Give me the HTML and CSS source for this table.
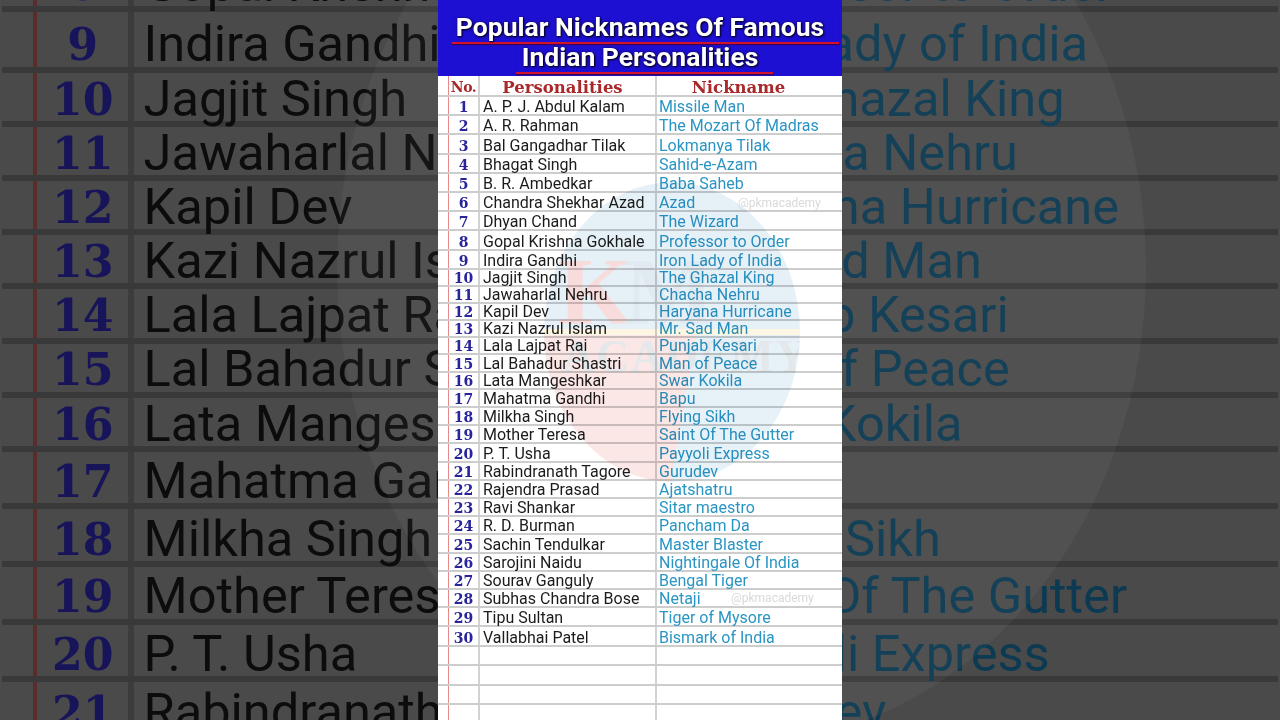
FILE: index.html
```html
<!DOCTYPE html>
<html lang="en">
<head>
<meta charset="utf-8">
<title>Popular Nicknames Of Famous Indian Personalities</title>
<link rel="stylesheet" href="styles.css">
</head>
<body>
<div class="backdrop" aria-hidden="true">
  <div class="panel">
    <div class="title">
      <span class="title-line"><span class="l1">Popular Nicknames Of Famous</span></span>
      <span class="title-line"><span class="l2">Indian Personalities</span></span>
    </div>
    <div class="table">
      <div class="row head"><div class="gap"></div><div class="no">No.</div><div class="name">Personalities</div><div class="nick">Nickname</div></div>
      <div class="row ra"><div class="gap"></div><div class="no">1</div><div class="name">A. P. J. Abdul Kalam</div><div class="nick">Missile Man</div></div>
      <div class="row ra"><div class="gap"></div><div class="no">2</div><div class="name">A. R. Rahman</div><div class="nick">The Mozart Of Madras</div></div>
      <div class="row ra"><div class="gap"></div><div class="no">3</div><div class="name">Bal Gangadhar Tilak</div><div class="nick">Lokmanya Tilak</div></div>
      <div class="row ra"><div class="gap"></div><div class="no">4</div><div class="name">Bhagat Singh</div><div class="nick">Sahid-e-Azam</div></div>
      <div class="row ra"><div class="gap"></div><div class="no">5</div><div class="name">B. R. Ambedkar</div><div class="nick">Baba Saheb</div></div>
      <div class="row ra"><div class="gap"></div><div class="no">6</div><div class="name">Chandra Shekhar Azad</div><div class="nick">Azad</div></div>
      <div class="row ra"><div class="gap"></div><div class="no">7</div><div class="name">Dhyan Chand</div><div class="nick">The Wizard</div></div>
      <div class="row ra"><div class="gap"></div><div class="no">8</div><div class="name">Gopal Krishna Gokhale</div><div class="nick">Professor to Order</div></div>
      <div class="row ra"><div class="gap"></div><div class="no">9</div><div class="name">Indira Gandhi</div><div class="nick">Iron Lady of India</div></div>
      <div class="row rb"><div class="gap"></div><div class="no">10</div><div class="name">Jagjit Singh</div><div class="nick">The Ghazal King</div></div>
      <div class="row rb"><div class="gap"></div><div class="no">11</div><div class="name">Jawaharlal Nehru</div><div class="nick">Chacha Nehru</div></div>
      <div class="row rb"><div class="gap"></div><div class="no">12</div><div class="name">Kapil Dev</div><div class="nick">Haryana Hurricane</div></div>
      <div class="row rb"><div class="gap"></div><div class="no">13</div><div class="name">Kazi Nazrul Islam</div><div class="nick">Mr. Sad Man</div></div>
      <div class="row rb"><div class="gap"></div><div class="no">14</div><div class="name">Lala Lajpat Rai</div><div class="nick">Punjab Kesari</div></div>
      <div class="row rb"><div class="gap"></div><div class="no">15</div><div class="name">Lal Bahadur Shastri</div><div class="nick">Man of Peace</div></div>
      <div class="row rb"><div class="gap"></div><div class="no">16</div><div class="name">Lata Mangeshkar</div><div class="nick">Swar Kokila</div></div>
      <div class="row rc"><div class="gap"></div><div class="no">17</div><div class="name">Mahatma Gandhi</div><div class="nick">Bapu</div></div>
      <div class="row rc"><div class="gap"></div><div class="no">18</div><div class="name">Milkha Singh</div><div class="nick">Flying Sikh</div></div>
      <div class="row rc"><div class="gap"></div><div class="no">19</div><div class="name">Mother Teresa</div><div class="nick">Saint Of The Gutter</div></div>
      <div class="row rc"><div class="gap"></div><div class="no">20</div><div class="name">P. T. Usha</div><div class="nick">Payyoli Express</div></div>
      <div class="row rc"><div class="gap"></div><div class="no">21</div><div class="name">Rabindranath Tagore</div><div class="nick">Gurudev</div></div>
      <div class="row rc"><div class="gap"></div><div class="no">22</div><div class="name">Rajendra Prasad</div><div class="nick">Ajatshatru</div></div>
      <div class="row rc"><div class="gap"></div><div class="no">23</div><div class="name">Ravi Shankar</div><div class="nick">Sitar maestro</div></div>
      <div class="row rc"><div class="gap"></div><div class="no">24</div><div class="name">R. D. Burman</div><div class="nick">Pancham Da</div></div>
      <div class="row rc"><div class="gap"></div><div class="no">25</div><div class="name">Sachin Tendulkar</div><div class="nick">Master Blaster</div></div>
      <div class="row rc"><div class="gap"></div><div class="no">26</div><div class="name">Sarojini Naidu</div><div class="nick">Nightingale Of India</div></div>
      <div class="row rc"><div class="gap"></div><div class="no">27</div><div class="name">Sourav Ganguly</div><div class="nick">Bengal Tiger</div></div>
      <div class="row rc"><div class="gap"></div><div class="no">28</div><div class="name">Subhas Chandra Bose</div><div class="nick">Netaji</div></div>
      <div class="row rc"><div class="gap"></div><div class="no">29</div><div class="name">Tipu Sultan</div><div class="nick">Tiger of Mysore</div></div>
      <div class="row rd"><div class="gap"></div><div class="no">30</div><div class="name">Vallabhai Patel</div><div class="nick">Bismark of India</div></div>
      <div class="row re"><div class="gap"></div><div class="no"></div><div class="name"></div><div class="nick"></div></div>
      <div class="row re"><div class="gap"></div><div class="no"></div><div class="name"></div><div class="nick"></div></div>
      <div class="row re"><div class="gap"></div><div class="no"></div><div class="name"></div><div class="nick"></div></div>
      <div class="row re"><div class="gap"></div><div class="no"></div><div class="name"></div><div class="nick"></div></div>
    </div>
    <div class="logo"></div>
  </div>
</div>

<div class="stage">
  <div class="panel">
    <div class="title">
      <span class="title-line"><span class="l1">Popular Nicknames Of Famous</span></span>
      <span class="title-line"><span class="l2">Indian Personalities</span></span>
    </div>
    <div class="table">
      <div class="row head"><div class="gap"></div><div class="no">No.</div><div class="name">Personalities</div><div class="nick">Nickname</div></div>
      <div class="row ra"><div class="gap"></div><div class="no">1</div><div class="name">A. P. J. Abdul Kalam</div><div class="nick">Missile Man</div></div>
      <div class="row ra"><div class="gap"></div><div class="no">2</div><div class="name">A. R. Rahman</div><div class="nick">The Mozart Of Madras</div></div>
      <div class="row ra"><div class="gap"></div><div class="no">3</div><div class="name">Bal Gangadhar Tilak</div><div class="nick">Lokmanya Tilak</div></div>
      <div class="row ra"><div class="gap"></div><div class="no">4</div><div class="name">Bhagat Singh</div><div class="nick">Sahid-e-Azam</div></div>
      <div class="row ra"><div class="gap"></div><div class="no">5</div><div class="name">B. R. Ambedkar</div><div class="nick">Baba Saheb</div></div>
      <div class="row ra"><div class="gap"></div><div class="no">6</div><div class="name">Chandra Shekhar Azad</div><div class="nick">Azad</div></div>
      <div class="row ra"><div class="gap"></div><div class="no">7</div><div class="name">Dhyan Chand</div><div class="nick">The Wizard</div></div>
      <div class="row ra"><div class="gap"></div><div class="no">8</div><div class="name">Gopal Krishna Gokhale</div><div class="nick">Professor to Order</div></div>
      <div class="row ra"><div class="gap"></div><div class="no">9</div><div class="name">Indira Gandhi</div><div class="nick">Iron Lady of India</div></div>
      <div class="row rb"><div class="gap"></div><div class="no">10</div><div class="name">Jagjit Singh</div><div class="nick">The Ghazal King</div></div>
      <div class="row rb"><div class="gap"></div><div class="no">11</div><div class="name">Jawaharlal Nehru</div><div class="nick">Chacha Nehru</div></div>
      <div class="row rb"><div class="gap"></div><div class="no">12</div><div class="name">Kapil Dev</div><div class="nick">Haryana Hurricane</div></div>
      <div class="row rb"><div class="gap"></div><div class="no">13</div><div class="name">Kazi Nazrul Islam</div><div class="nick">Mr. Sad Man</div></div>
      <div class="row rb"><div class="gap"></div><div class="no">14</div><div class="name">Lala Lajpat Rai</div><div class="nick">Punjab Kesari</div></div>
      <div class="row rb"><div class="gap"></div><div class="no">15</div><div class="name">Lal Bahadur Shastri</div><div class="nick">Man of Peace</div></div>
      <div class="row rb"><div class="gap"></div><div class="no">16</div><div class="name">Lata Mangeshkar</div><div class="nick">Swar Kokila</div></div>
      <div class="row rc"><div class="gap"></div><div class="no">17</div><div class="name">Mahatma Gandhi</div><div class="nick">Bapu</div></div>
      <div class="row rc"><div class="gap"></div><div class="no">18</div><div class="name">Milkha Singh</div><div class="nick">Flying Sikh</div></div>
      <div class="row rc"><div class="gap"></div><div class="no">19</div><div class="name">Mother Teresa</div><div class="nick">Saint Of The Gutter</div></div>
      <div class="row rc"><div class="gap"></div><div class="no">20</div><div class="name">P. T. Usha</div><div class="nick">Payyoli Express</div></div>
      <div class="row rc"><div class="gap"></div><div class="no">21</div><div class="name">Rabindranath Tagore</div><div class="nick">Gurudev</div></div>
      <div class="row rc"><div class="gap"></div><div class="no">22</div><div class="name">Rajendra Prasad</div><div class="nick">Ajatshatru</div></div>
      <div class="row rc"><div class="gap"></div><div class="no">23</div><div class="name">Ravi Shankar</div><div class="nick">Sitar maestro</div></div>
      <div class="row rc"><div class="gap"></div><div class="no">24</div><div class="name">R. D. Burman</div><div class="nick">Pancham Da</div></div>
      <div class="row rc"><div class="gap"></div><div class="no">25</div><div class="name">Sachin Tendulkar</div><div class="nick">Master Blaster</div></div>
      <div class="row rc"><div class="gap"></div><div class="no">26</div><div class="name">Sarojini Naidu</div><div class="nick">Nightingale Of India</div></div>
      <div class="row rc"><div class="gap"></div><div class="no">27</div><div class="name">Sourav Ganguly</div><div class="nick">Bengal Tiger</div></div>
      <div class="row rc"><div class="gap"></div><div class="no">28</div><div class="name">Subhas Chandra Bose</div><div class="nick">Netaji</div></div>
      <div class="row rc"><div class="gap"></div><div class="no">29</div><div class="name">Tipu Sultan</div><div class="nick">Tiger of Mysore</div></div>
      <div class="row rd"><div class="gap"></div><div class="no">30</div><div class="name">Vallabhai Patel</div><div class="nick">Bismark of India</div></div>
      <div class="row re"><div class="gap"></div><div class="no"></div><div class="name"></div><div class="nick"></div></div>
      <div class="row re"><div class="gap"></div><div class="no"></div><div class="name"></div><div class="nick"></div></div>
      <div class="row re"><div class="gap"></div><div class="no"></div><div class="name"></div><div class="nick"></div></div>
      <div class="row re"><div class="gap"></div><div class="no"></div><div class="name"></div><div class="nick"></div></div>
    </div>
    <div class="logo"><span class="logo-k">K</span><span class="logo-m">M</span><span class="logo-academy">ACADEMY</span></div>
    <div class="wm wm1">@pkmacademy</div>
    <div class="wm wm2">@pkmacademy</div>
  </div>
</div>
</body>
</html>
```
FILE: styles.css
```css
html {
  margin: 0;
  padding: 0;
  background: #4b4b4b;
  overflow: hidden;
}

body {
  margin: 0;
  padding: 0;
  width: 1280px;
  height: 720px;
  overflow: hidden;
  position: relative;
  background: #4b4b4b;
  font-family: Roboto, "Liberation Sans", sans-serif;
}

/* enlarged, darkened copy of the frame behind the video */
.backdrop {
  position: absolute;
  left: 1.7px;
  top: -780px;
}

.backdrop .panel {
  zoom: 3.16;
}

.stage {
  position: relative;
  display: flex;
  justify-content: center;
  height: 720px;
}

.panel {
  position: relative;
  width: 404px;
  height: 720px;
  flex: none;
  background: #ffffff;
  overflow: hidden;
  display: flex;
  flex-direction: column;
}

/* ---------- title ---------- */
.title {
  flex: none;
  height: 76px;
  box-sizing: border-box;
  padding-top: 12px;
  background: #1e10d2;
  color: #ffffff;
  font: 700 26.5px/30px Roboto, "Liberation Sans", sans-serif;
  text-align: center;
  text-shadow: 1px 1px 2px rgba(0, 0, 0, 0.95), 0 0 3px rgba(0, 0, 0, 0.55);
  white-space: nowrap;
}

.title-line {
  display: block;
  height: 30px;
}

.title-line > span {
  display: inline-block;
  height: 30px;
  box-sizing: content-box;
  border-bottom: 2px solid #d3132c;
  box-shadow: 0 1px 1px rgba(70, 0, 40, 0.7);
}

.l1 {
  padding: 0 15px 0 4px;
  margin-left: 11px;
}

.l2 {
  padding: 0 15px 0 6px;
  margin-left: 9px;
}

/* ---------- table ---------- */
.table {
  flex: 1;
  display: flex;
  flex-direction: column;
}

.row {
  flex: none;
  display: grid;
  grid-template-columns: 10px 30px 177px 1fr;
  box-sizing: border-box;
  border-bottom: 2px solid #cdcdcd;
}

.row.head { height: 21px; }
.row.ra { height: 19.2px; }
.row.rb { height: 17.15px; }
.row.rc { height: 18.23px; }
.row.rd { height: 20px; }
.row.re { height: 19.5px; }

.row > div {
  display: flex;
  align-items: flex-end;
  box-sizing: border-box;
  white-space: nowrap;
  line-height: 14px;
}

.no {
  justify-content: center;
  border-left: 1.5px solid #e98a8a;
  font: 700 14px/14px "DejaVu Serif", "Liberation Serif", serif;
  color: #29249c;
}

.name {
  border-left: 2px solid #d2d2d2;
  padding-left: 3px;
  font-size: 16px;
  color: #1b1b1b;
}

.nick {
  border-left: 2px solid #d2d2d2;
  padding-left: 2px;
  font-size: 16px;
  color: #2a95c4;
}

.row.head > div {
  font: 700 16.5px/15px "DejaVu Serif", "Liberation Serif", serif;
  color: #a9292b;
  justify-content: center;
  padding-left: 0;
}

.row.head > .no {
  font-size: 14px;
  letter-spacing: -0.5px;
}

.row.head > .name {
  padding-right: 10px;
}

.row.head > .nick {
  padding-right: 22px;
}

/* ---------- watermarks ---------- */
.logo {
  position: absolute;
  left: 106px;
  top: 182px;
  width: 256px;
  height: 300px;
  border-radius: 50%;
  overflow: hidden;
  mix-blend-mode: multiply;
  pointer-events: none;
  background:
    linear-gradient(to bottom, transparent 0 49%, #fcf6e2 49% 51%, transparent 51%),
    linear-gradient(to bottom, #e6f1f7 0 50%, transparent 50%),
    linear-gradient(100deg, #fce7e7 0 58%, #e7f2f8 58%);
  font-family: "Liberation Serif", serif;
  font-weight: 700;
}

.logo-k {
  position: absolute;
  left: 14px;
  top: 62px;
  font-size: 96px;
  line-height: 1;
  color: #f8dcdc;
}

.logo-m {
  position: absolute;
  left: 80px;
  top: 62px;
  font-size: 96px;
  line-height: 1;
  color: #e0eaf0;
}

.logo-academy {
  position: absolute;
  left: 18px;
  top: 152px;
  font-size: 46px;
  line-height: 1;
  letter-spacing: 1px;
  color: #e4e8eb;
}

.wm {
  position: absolute;
  font: 400 12px/14px Roboto, "Liberation Sans", sans-serif;
  color: #d9d9d9;
  white-space: nowrap;
  pointer-events: none;
}

.wm1 { left: 300px; top: 196px; }
.wm2 { left: 293px; top: 591px; }

/* ---------- dimmed colours of the enlarged copy ---------- */
.backdrop .panel { background: #4a4a4a; }
.backdrop .title { background: #0a0540; }
.backdrop .row { border-bottom-color: #393939; }
.backdrop .no { border-left-color: #5a2c2c; color: #17145a; }
.backdrop .name { border-left-color: #3c3c3c; color: #0c0c0c; }
.backdrop .nick { border-left-color: #3c3c3c; color: #0c3a52; }
.backdrop .row.head > div { color: #3a0e0e; }
.backdrop .logo {
  mix-blend-mode: normal;
  background: rgba(255, 255, 255, 0.04);
}
```
